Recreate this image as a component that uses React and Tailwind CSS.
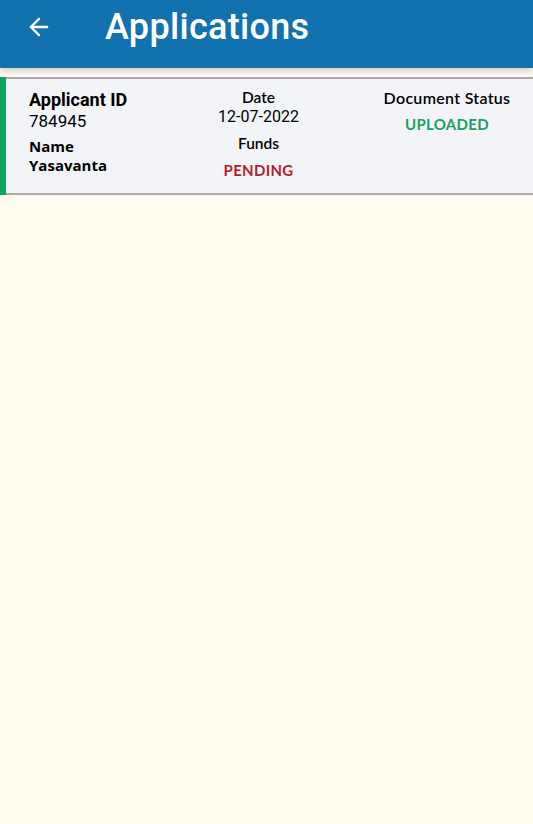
import { ArrowLeft } from 'lucide-react';

const App = () => {
    return (
        <div className="min-h-[824px] bg-[#fffbf0] font-['Roboto',sans-serif]">
            {/* HEADER */}
            <div className="h-[68px] bg-[#1272b0] flex items-center shadow-[0_3px_6px_rgba(0,0,0,0.18)]">
                <ArrowLeft className="ml-[25px] w-[28px] h-[28px] text-white -mt-[14px]" strokeWidth={2} />
                <h1 className="ml-[52px] -mt-[14px] text-white text-[36px] font-medium tracking-[0.3px]">Applications</h1>
            </div>

            {/* APPLICATION CARD */}
            <div className="mt-[9px] flex bg-[#f3f4f8]">
                <div className="w-[6px] bg-[#0fa55a] shrink-0"></div>
                <div className="flex-1 border-y-2 border-[#a9a9a9] flex pt-[9px] pb-[12px] h-[118px]">
                    <div className="w-[180px] pl-[23px] text-black">
                        <div className="text-[18px] font-bold leading-[22px] mt-[1px]">Applicant ID</div>
                        <div className="text-[17px] leading-[20px]">784945</div>
                        <div className="mt-[6px] text-[15px] font-bold leading-[19px] font-['Open_Sans',sans-serif]">Name</div>
                        <div className="text-[15px] font-bold leading-[19px] font-['Open_Sans',sans-serif]">Yasavanta</div>
                    </div>
                    <div className="w-[145px] flex flex-col items-center text-black">
                        <div className="text-[15.5px] font-semibold leading-[19px] font-['Lato',sans-serif]">Date</div>
                        <div className="text-[16px] leading-[19px]">12-07-2022</div>
                        <div className="mt-[8px] text-[15.5px] font-semibold leading-[19px] font-['Lato',sans-serif]">Funds</div>
                        <div className="mt-[8px] text-[15px] font-bold leading-[19px] text-[#b71c2c] tracking-[0.3px] font-['Lato',sans-serif]">PENDING</div>
                    </div>
                    <div className="flex-1 pl-[30px] flex flex-col items-center text-black">
                        <div className="text-[16px] font-semibold leading-[19px] tracking-[0.3px] font-['Lato',sans-serif]">Document Status</div>
                        <div className="mt-[8px] text-[15px] font-bold leading-[19px] text-[#1aa060] tracking-[0.3px] font-['Lato',sans-serif]">UPLOADED</div>
                    </div>
                </div>
            </div>
        </div>
    );
};

export default App;
